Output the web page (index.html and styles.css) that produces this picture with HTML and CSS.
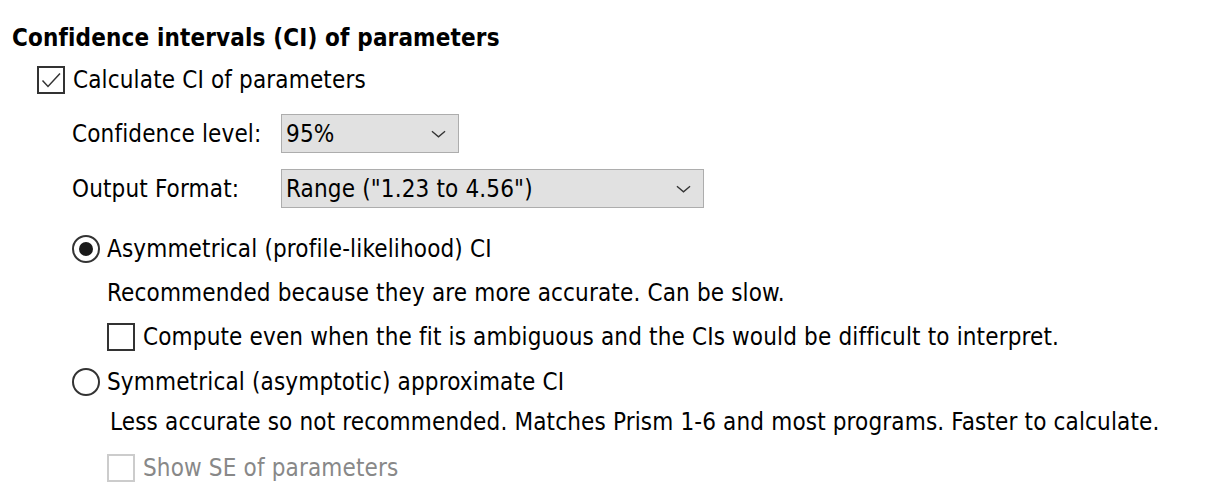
FILE: index.html
```html
<!DOCTYPE html>
<html lang="en">
<head>
  <meta charset="UTF-8">
  <title>Confidence intervals</title>
  <link rel="stylesheet" href="styles.css">
</head>
<body>
  <div class="panel">
    <h2 class="title">Confidence intervals (CI) of parameters</h2>

    <label class="row calc">
      <span class="box"><svg viewBox="0 0 24 24"><path d="M3.5 12.5 L9 18.5 L21 5.5" fill="none" stroke="#333" stroke-width="1.5"/></svg></span>
      Calculate CI of parameters
    </label>

    <div class="fields">
      <div class="field">
        <span class="field-label">Confidence level:</span>
        <div class="select small">95%<svg class="chev" viewBox="0 0 16 10"><path d="M1 2 L8 8 L15 2" fill="none" stroke="#333" stroke-width="1.4"/></svg></div>
      </div>
      <div class="field">
        <span class="field-label">Output Format:</span>
        <div class="select wide">Range ("1.23 to 4.56")<svg class="chev" viewBox="0 0 16 10"><path d="M1 2 L8 8 L15 2" fill="none" stroke="#333" stroke-width="1.4"/></svg></div>
      </div>
    </div>

    <div class="options">
      <label class="row radio-row">
        <span class="radio on"></span>
        Asymmetrical (profile-likelihood) CI
      </label>
      <p class="note">Recommended because they are more accurate. Can be slow.</p>
      <label class="row sub">
        <span class="box"></span>
        Compute even when the fit is ambiguous and the CIs would be difficult to interpret.
      </label>

      <label class="row radio-row sym">
        <span class="radio"></span>
        Symmetrical (asymptotic) approximate CI
      </label>
      <p class="note note2">Less accurate so not recommended. Matches Prism 1-6 and most programs. Faster to calculate.</p>
      <label class="row sub disabled">
        <span class="box"></span>
        Show SE of parameters
      </label>
    </div>
  </div>
</body>
</html>
```

FILE: styles.css
```css
body {
  margin: 0;
  background: #fff;
  color: #000;
  font-family: "DejaVu Sans Condensed", "DejaVu Sans", sans-serif;
  font-size: 24px;
  letter-spacing: 0.15px;
}
.panel {
  padding: 24px 0 0 12px;
}
.title {
  margin: 0;
  font-size: 24px;
  font-weight: bold;
  line-height: 28px;
}
.row {
  display: flex;
  align-items: center;
  gap: 8px;
  line-height: 28px;
}
.calc {
  margin: 14px 0 0 25px;
}
.box {
  width: 28px;
  height: 28px;
  box-sizing: border-box;
  border: 2px solid #333;
  background: #fff;
  flex: none;
}
.box svg {
  display: block;
  width: 24px;
  height: 24px;
}
.fields {
  margin: 20px 0 0 60px;
  display: flex;
  flex-direction: column;
  gap: 16px;
}
.field {
  display: flex;
  align-items: center;
}
.field-label {
  width: 209px;
}
.select {
  height: 39px;
  box-sizing: border-box;
  border: 1px solid #adadad;
  background: #e1e1e1;
  display: flex;
  align-items: center;
  justify-content: space-between;
  padding: 0 12px 0 4px;
}
.select.small {
  width: 178px;
}
.select.wide {
  width: 423px;
}
.chev {
  width: 15px;
  height: 10px;
}
.options {
  margin: 27px 0 0 60px;
}
.radio {
  width: 28px;
  height: 28px;
  box-sizing: border-box;
  border: 2px solid #333;
  border-radius: 50%;
  flex: none;
  display: flex;
  align-items: center;
  justify-content: center;
}
.radio.on::after {
  content: "";
  width: 14px;
  height: 14px;
  border-radius: 50%;
  background: #1a1a1a;
}
.radio-row {
  gap: 7px;
}
.note {
  margin: 16px 0 0 35px;
  line-height: 28px;
}
.note2 {
  margin: 12px 0 0 38px;
}
.sub {
  margin: 16px 0 0 35px;
}
.sym {
  margin-top: 17px;
}
.disabled {
  color: #888;
  margin-top: 18px;
}
.disabled .box {
  border-color: #ccc;
}
```
